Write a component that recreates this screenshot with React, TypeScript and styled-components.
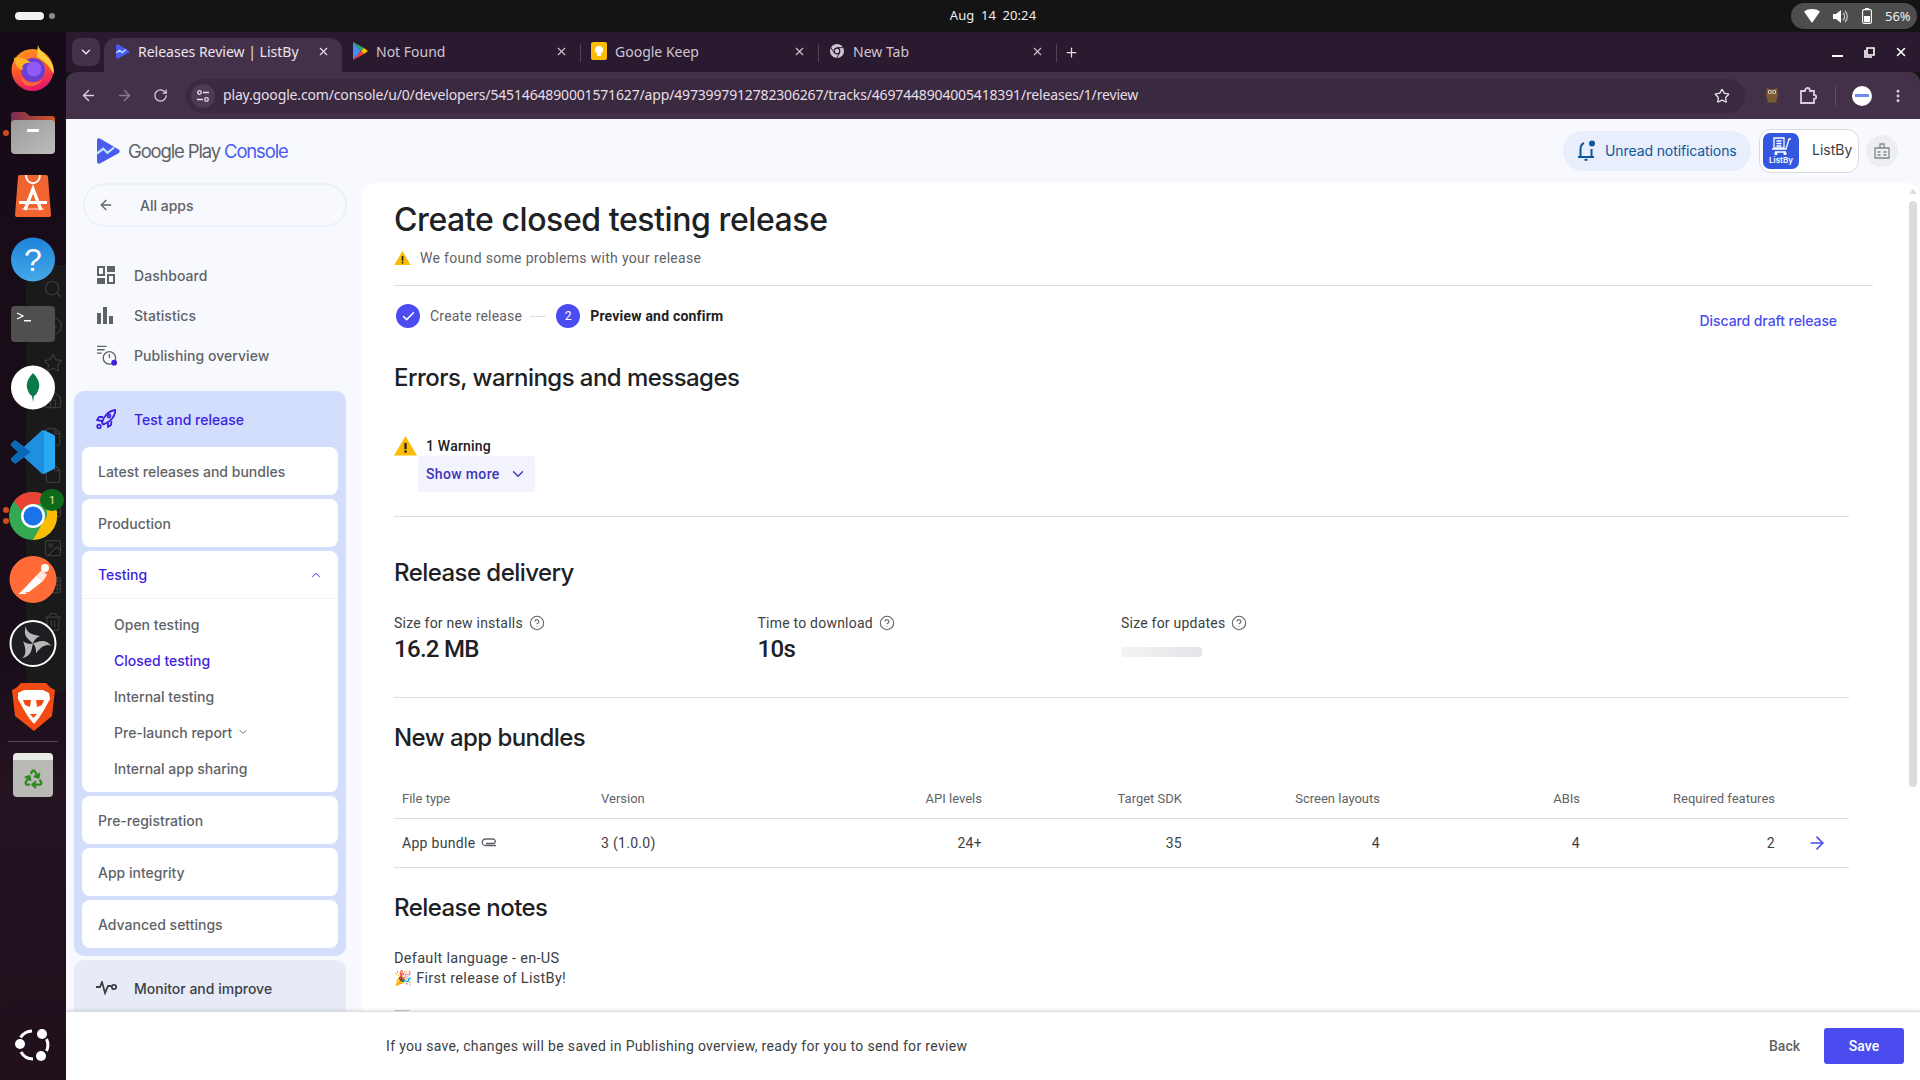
import React from "react";
import styled, { createGlobalStyle } from "styled-components";
import {
  ArrowLeft, ArrowRight, ChevronDown, ChevronUp, Clock, File, Film, Home, Image, Music,
  Recycle, RotateCw, Search, Star, Trash2, X, Plus, Check, EllipsisVertical, HelpCircle,
} from "lucide-react";

const SANS = `"Inter", "Liberation Sans", sans-serif`;
const BODY = `"Roboto", "Liberation Sans", sans-serif`;
const UI = `"Noto Sans", "Open Sans", sans-serif`;

const GlobalStyle = createGlobalStyle`
  html, body { margin: 0; padding: 0; height: 100%; overflow: hidden; background: #141414; }
  #root { height: 100%; }
  * { box-sizing: border-box; }
`;

const Screen = styled.div`
  width: 1920px;
  height: 1080px;
  display: flex;
  flex-direction: column;
  overflow: hidden;
`;

/* ---------- ubuntu top bar ---------- */
const TopBar = styled.div`
  height: 32px;
  flex: none;
  background: #141414;
  display: grid;
  grid-template-columns: 1fr auto 1fr;
  align-items: center;
  color: #eee;
  font: 13px ${UI};
`;
const Workspaces = styled.div`
  display: flex;
  align-items: center;
  gap: 5px;
  padding-left: 15px;
`;
const WorkspacePill = styled.span<{ $active?: boolean }>`
  display: block;
  width: ${(p) => (p.$active ? "29px" : "6px")};
  height: ${(p) => (p.$active ? "8px" : "6px")};
  border-radius: 4px;
  background: ${(p) => (p.$active ? "#f2f2f2" : "#8a8a8a")};
`;
const Clockface = styled.div`
  margin: 0 0 2px 66px;
  word-spacing: 3px;
  letter-spacing: 0.1px;
`;
const SystemPill = styled.div`
  justify-self: end;
  margin-right: 3px;
  width: 126px;
  height: 26px;
  border-radius: 13px;
  background: #4d4d4d;
  display: flex;
  align-items: center;
  gap: 13px;
  padding-left: 13px;
  font-size: 13px;
`;

const Desktop = styled.div`
  flex: 1;
  display: flex;
  min-height: 0;
`;

/* ---------- dock ---------- */
const Dock = styled.div`
  width: 66px;
  flex: none;
  position: relative;
  background: linear-gradient(176deg, #150b16 0%, #1a0d1a 60%, #241320 72%, #1f101c 100%);
  display: flex;
  flex-direction: column;
  align-items: center;
  padding-top: 13px;
`;
const GhostPanel = styled.div`
  position: absolute;
  left: 26px;
  top: 233px;
  width: 40px;
  height: 427px;
  background: #1a1a1a;
  display: flex;
  flex-direction: column;
  align-items: flex-end;
  gap: 17px;
  padding: 14px 3px 0 0;
  color: #3a3a3a;
`;
const DockSlot = styled.div<{ $h: number }>`
  position: relative;
  z-index: 1;
  width: 66px;
  height: ${(p) => p.$h}px;
  flex: none;
  display: flex;
  align-items: center;
  justify-content: center;
`;
const RunDot = styled.span<{ $top: number }>`
  position: absolute;
  left: 3px;
  top: ${(p) => p.$top}px;
  width: 6px;
  height: 6px;
  border-radius: 50%;
  background: #d2491c;
`;
const DockBadge = styled.span`
  position: absolute;
  left: 40px;
  top: -3px;
  width: 24px;
  height: 22px;
  border-radius: 50%;
  background: #0f6b1c;
  color: #e8e0a0;
  font: 11px ${BODY};
  display: flex;
  align-items: center;
  justify-content: center;
`;
const DockRule = styled.div`
  width: 50px;
  height: 1px;
  background: #55484f;
  margin: 10px 0 11px;
  position: relative;
  z-index: 1;
`;
const DockBottom = styled.div`
  margin-top: auto;
  margin-bottom: 19px;
  position: relative;
  z-index: 1;
  display: flex;
`;
const TrashTile = styled.div`
  width: 40px;
  height: 44px;
  border-radius: 4px;
  background: #b9b9b5;
  border-top: 7px solid #e9e9e6;
  display: flex;
  align-items: center;
  justify-content: center;
  color: #2d8a1f;
`;

/* ---------- browser chrome ---------- */
const Browser = styled.div`
  flex: 1;
  min-width: 0;
  display: flex;
  flex-direction: column;
`;
const TabStrip = styled.div`
  height: 40px;
  flex: none;
  background: #2a1a30;
  display: flex;
  padding: 6px 0 0 6px;
  color: #ddd3df;
  font: 14px ${UI};
`;
const TabSearch = styled.div`
  width: 28px;
  height: 28px;
  border-radius: 8px;
  background: #433149;
  display: flex;
  align-items: center;
  justify-content: center;
  color: #e8e0ea;
  margin-right: 4px;
`;
const Tab = styled.div<{ $active?: boolean }>`
  width: 238px;
  height: 34px;
  flex: none;
  display: flex;
  align-items: center;
  gap: 8px;
  padding: 0 12px 8px 11px;
  position: relative;
  border-radius: 12px 12px 0 0;
  background: ${(p) => (p.$active ? "#433149" : "transparent")};
  color: ${(p) => (p.$active ? "#ece4ee" : "#cfc5d2")};
`;
const TabTitle = styled.span`
  flex: 1;
  white-space: nowrap;
  overflow: hidden;
`;
const TabEdge = styled.span`
  position: absolute;
  right: -1px;
  top: 6px;
  width: 1px;
  height: 18px;
  background: #514357;
`;
const NewTab = styled.div`
  width: 28px;
  height: 28px;
  display: flex;
  align-items: center;
  justify-content: center;
  margin-left: 1px;
  color: #e4dce6;
`;
const WindowControls = styled.div`
  margin-left: auto;
  display: flex;
  align-items: center;
  height: 28px;
  padding-right: 3px;
  color: #fff;
`;
const ControlSlot = styled.div`
  width: 32px;
  display: flex;
  align-items: center;
  justify-content: center;
`;
const MinimizeBar = styled.span`
  width: 11px;
  height: 2px;
  background: #fff;
  margin-top: 8px;
`;
const Toolbar = styled.div`
  height: 47px;
  flex: none;
  background: #433149;
  border-radius: 10px 10px 0 0;
  display: flex;
  align-items: center;
  padding: 0 4px;
  color: #d9cfdc;
`;
const NavIcon = styled.div<{ $dim?: boolean }>`
  width: 36px;
  display: flex;
  justify-content: center;
  color: ${(p) => (p.$dim ? "#8a7a8f" : "#d9cfdc")};
`;
const Omnibox = styled.div`
  width: 1559px;
  height: 34px;
  margin-left: 8px;
  border-radius: 17px;
  background: #3a2a3f;
  display: flex;
  align-items: center;
  padding: 0 15px 0 5px;
  color: #e6dee8;
  font: 14px ${UI};
`;
const SiteChip = styled.div`
  width: 24px;
  height: 24px;
  border-radius: 50%;
  background: #4c3b52;
  display: flex;
  align-items: center;
  justify-content: center;
  margin-right: 8px;
`;
const Url = styled.span`
  flex: 1;
  white-space: nowrap;
  letter-spacing: -0.16px;
  padding-bottom: 3px;
`;
const ToolGroup = styled.div`
  flex: 1;
  display: flex;
  align-items: center;
  justify-content: flex-end;
`;
const ToolSlot = styled.div<{ $w: number }>`
  width: ${(p) => p.$w}px;
  display: flex;
  justify-content: center;
  align-items: center;
`;
const ToolRule = styled.span`
  width: 1px;
  height: 20px;
  background: #5e4e64;
`;
const Avatar = styled.span`
  width: 20px;
  height: 20px;
  border-radius: 50%;
  background: #fff;
  display: flex;
  align-items: center;
  justify-content: center;
`;

/* ---------- play console page ---------- */
const Page = styled.div`
  flex: 1;
  min-height: 0;
  display: flex;
  flex-direction: column;
  background: #f8f9fe;
  position: relative;
`;
const ConsoleHeader = styled.header`
  height: 64px;
  flex: none;
  display: flex;
  align-items: center;
  padding: 0 22px 0 29px;
`;
const Logo = styled.div`
  display: flex;
  align-items: center;
  gap: 7px;
  font: 400 18.5px ${SANS};
  letter-spacing: -1.15px;
  color: #5f6368;
`;
const LogoAccent = styled.span`
  color: #4a5cf0;
`;
const HeaderRight = styled.div`
  margin-left: auto;
  display: flex;
  align-items: center;
`;
const UnreadPill = styled.div`
  width: 188px;
  height: 40px;
  border-radius: 20px;
  background: #e8eefc;
  color: #0b57a0;
  display: flex;
  align-items: center;
  gap: 8px;
  padding: 0 0 1px 14px;
  font: 14px ${SANS};
  letter-spacing: -0.1px;
  margin-right: 8px;
`;
const AppChip = styled.div`
  width: 100px;
  height: 44px;
  border: 1px solid #dadce0;
  border-radius: 12px;
  background: #fff;
  display: flex;
  align-items: center;
  padding-left: 3px;
  gap: 13px;
  color: #3c4043;
  font: 14px ${SANS};
  margin-right: 7px;
`;
const ChipName = styled.span`
  padding-bottom: 3px;
`;
const AppTile = styled.div`
  width: 36px;
  height: 36px;
  border-radius: 7px;
  background: #3457e0;
  display: flex;
  flex-direction: column;
  align-items: center;
  justify-content: center;
  color: #fff;
  font: 600 8px ${SANS};
`;
const RoundButton = styled.div`
  width: 32px;
  height: 32px;
  border-radius: 50%;
  background: #eceef1;
  display: flex;
  align-items: center;
  justify-content: center;
`;
const Workspace = styled.div`
  flex: 1;
  min-height: 0;
  display: flex;
  overflow: hidden;
`;

/* ---------- sidebar ---------- */
const Sidebar = styled.aside`
  width: 296px;
  flex: none;
  padding: 0 16px 0 8px;
`;
const AllApps = styled.div`
  height: 44px;
  margin-left: 9px;
  width: 264px;
  border: 2px solid #edf0f8;
  border-radius: 22px;
  display: flex;
  align-items: center;
  padding-left: 13px;
  gap: 26px;
  color: #5f6368;
  font: 500 14px ${SANS};
`;
const TopNav = styled.nav`
  margin-top: 28px;
  display: flex;
  flex-direction: column;
`;
const NavRow = styled.div`
  height: 40px;
  display: flex;
  align-items: center;
  gap: 17px;
  padding-left: 23px;
  color: #5f6368;
  font: 500 14px ${SANS};
  letter-spacing: 0.05px;
`;
const NavGlyph = styled.span`
  width: 20px;
  flex: none;
  display: flex;
`;
const Section = styled.div`
  margin-top: 16px;
  background: #d3defc;
  border-radius: 10px;
  padding: 0 8px 8px;
`;
const SectionHead = styled.div`
  height: 56px;
  display: flex;
  align-items: center;
  gap: 18px;
  padding-left: 14px;
  color: #3d1fe0;
  font: 500 14px ${SANS};
`;
const SubCards = styled.div`
  display: flex;
  flex-direction: column;
  gap: 4px;
`;
const SubCard = styled.div`
  background: #fff;
  border-radius: 8px;
`;
const SubTitle = styled.div<{ $active?: boolean; $ruled?: boolean }>`
  height: 48px;
  display: flex;
  align-items: center;
  justify-content: space-between;
  padding: 0 15px 0 16px;
  color: ${(p) => (p.$active ? "#3d1fe0" : "#5f6368")};
  font: 500 14px ${SANS};
  border-bottom: ${(p) => (p.$ruled ? "1px solid #f1f3f4" : "none")};
`;
const SubList = styled.div`
  padding: 7px 0 6px;
`;
const SubItem = styled.div<{ $active?: boolean }>`
  height: 36px;
  display: flex;
  align-items: center;
  gap: 5px;
  padding-left: 32px;
  color: ${(p) => (p.$active ? "#3d1fe0" : "#5f6368")};
  font: 500 14px ${SANS};
`;
const MonitorHead = styled.div`
  margin-top: 4px;
  height: 56px;
  background: #e7ebf8;
  border-radius: 10px 10px 0 0;
  display: flex;
  align-items: center;
  gap: 17px;
  padding-left: 22px;
  color: #3c4043;
  font: 500 14px ${SANS};
`;

/* ---------- main card ---------- */
const Main = styled.main`
  flex: 1;
  min-width: 0;
  background: #fff;
  border-radius: 12px 12px 0 0;
  padding: 0 71px 0 32px;
  position: relative;
  overflow: hidden;
`;
const Title = styled.h1`
  margin: 0;
  padding-top: 17px;
  height: 59px;
  font: 500 32px/40px ${SANS};
  letter-spacing: -0.42px;
  color: #202124;
`;
const WarnLine = styled.div`
  height: 44px;
  margin-right: -24px;
  padding-top: 5px;
  display: flex;
  gap: 9px;
  color: #5f6368;
  font: 14px/22px ${BODY};
  letter-spacing: 0.32px;
  border-bottom: 1px solid #dadce0;
  align-items: flex-start;
`;
const WarnGlyph = styled.span`
  display: flex;
  padding-top: 4px;
`;
const Stepper = styled.div`
  margin-top: 18px;
  height: 24px;
  display: flex;
  align-items: center;
  font: 14px ${BODY};
  letter-spacing: 0.2px;
  color: #5f6368;
`;
const StepDot = styled.span`
  width: 24px;
  height: 24px;
  border-radius: 50%;
  background: #4a4cf0;
  color: #fff;
  display: flex;
  align-items: center;
  justify-content: center;
  font: 12px ${BODY};
  margin: 0 10px 0 2px;
`;
const StepLine = styled.span`
  width: 16px;
  height: 1px;
  background: #dadce0;
  margin: 0 8px;
`;
const StepStrong = styled.span`
  color: #202124;
  font-weight: 700;
`;
const Discard = styled.a`
  margin-left: auto;
  margin-right: 12px;
  margin-top: 8px;
  color: #4a4cf0;
  font: 500 14px ${SANS};
  letter-spacing: -0.08px;
`;
const SectionTitle = styled.h2<{ $top: number }>`
  margin: ${(p) => p.$top}px 0 0;
  font: 500 24px/32px ${SANS};
  letter-spacing: -0.55px;
  color: #202124;
`;
const WarnBlock = styled.div`
  margin-top: 42px;
  display: flex;
  gap: 9px;
`;
const WarnCount = styled.div`
  color: #202124;
  font: 500 14px/20px ${BODY};
  letter-spacing: 0.2px;
`;
const WarnBody = styled.div`
  padding-top: 0;
`;
const ShowMore = styled.div`
  width: 117px;
  height: 36px;
  margin-left: -8px;
  background: #f3f3fd;
  border-radius: 3px;
  display: flex;
  align-items: center;
  gap: 9px;
  padding-left: 8px;
  color: #3d35b8;
  font: 500 14px ${BODY};
  letter-spacing: 0.35px;
`;
const Rule = styled.hr<{ $top: number }>`
  margin: ${(p) => p.$top}px 0 0;
  border: 0;
  height: 1px;
  background: #dadce0;
`;
const Stats = styled.div`
  margin-top: 24px;
  display: grid;
  grid-template-columns: repeat(3, 363.5px);
`;
const StatLabel = styled.div`
  display: flex;
  align-items: center;
  gap: 6px;
  color: #3c4043;
  font: 14px/20px ${BODY};
  letter-spacing: 0.22px;
`;
const StatValue = styled.div`
  font: 500 24px/30px ${BODY};
  letter-spacing: -0.7px;
  color: #202124;
  padding-top: 1px;
  height: 30px;
`;
const Skeleton = styled.div`
  width: 81px;
  height: 10px;
  margin-top: 14px;
  border-radius: 3px;
  background: linear-gradient(90deg, #f1f3f4, #e3e5e8);
`;
const BundleTable = styled.div`
  margin-top: 21px;
`;
const TableRow = styled.div<{ $head?: boolean }>`
  display: grid;
  grid-template-columns: 199px 197px 200px 200px 198px 200px 195px 66px;
  align-items: center;
  height: ${(p) => (p.$head ? "44px" : "49px")};
  padding-top: ${(p) => (p.$head ? "4px" : "0")};
  border-bottom: 1px solid #dadce0;
  color: ${(p) => (p.$head ? "#5f6368" : "#3c4043")};
  font: ${(p) => (p.$head ? "13px" : "14px")} ${BODY};
  letter-spacing: ${(p) => (p.$head ? "0" : "0.3px")};
`;
const Cell = styled.div<{ $right?: boolean }>`
  padding: 0 8px;
  white-space: nowrap;
  display: flex;
  align-items: center;
  justify-content: ${(p) => (p.$right ? "flex-end" : "flex-start")};
  gap: 6px;
`;
const ArrowCell = styled.div`
  padding-left: 24px;
  display: flex;
  color: #4a4cf0;
`;
const Notes = styled.div`
  margin-top: 25px;
  color: #3c4043;
  font: 14.5px/20px ${BODY};
  letter-spacing: 0.3px;
`;
const NoteGlyph = styled.div`
  margin-top: 21px;
  width: 16px;
  height: 16px;
  background: #b9c6cc;
  border-radius: 2px;
`;
const ScrollUp = styled.span`
  position: absolute;
  right: 3px;
  top: 6px;
  width: 0;
  height: 0;
  border-left: 4px solid transparent;
  border-right: 4px solid transparent;
  border-bottom: 5px solid #dadce0;
`;
const ScrollThumb = styled.span`
  position: absolute;
  right: 3px;
  top: 18px;
  width: 8px;
  height: 586px;
  border-radius: 4px;
  background: #dadce0;
`;

/* ---------- footer ---------- */
const Footer = styled.footer`
  height: 69px;
  flex: none;
  background: #fff;
  border-top: 1px solid #dadce0;
  box-shadow: 0 -1px 3px rgba(60, 64, 67, 0.15);
  display: flex;
  align-items: center;
  padding: 0 16px 0 320px;
  position: relative;
  z-index: 2;
  color: #3c4043;
  font: 14px ${BODY};
`;
const FooterNote = styled.span`
  flex: 1;
  letter-spacing: 0.33px;
`;
const BackLink = styled.span`
  color: #5f6368;
  font-weight: 500;
  margin-right: 24px;
`;
const SaveButton = styled.button`
  width: 80px;
  height: 36px;
  border: 0;
  border-radius: 3px;
  background: #4a4cf0;
  color: #fff;
  font: 500 14px ${BODY};
`;

/* ---------- drawings ---------- */
const WarnIcon = ({ size }: { size: number }) => (
  <svg width={size} height={size * 0.85} viewBox="0 0 20 17">
    <path d="M10 0 20 17H0Z" fill="#fbbc04" />
    <rect x="9" y="6" width="2" height="5.5" fill="#202124" />
    <rect x="9" y="12.6" width="2" height="2" fill="#202124" />
  </svg>
);

const ConsoleMark = ({ size }: { size: number }) => (
  <svg width={size} height={size} viewBox="0 0 24 26">
    <path d="M1 2.2C1 .6 2.6-.2 3.9.6L22.6 11.4c1.5.9 1.5 2.9 0 3.8L3.9 25.4C2.6 26.2 1 25.3 1 23.8Z" fill="#4a5cf0" />
    <path d="M1 15.5 7.2 10.8 11.5 14.8 18 9.5" fill="none" stroke="#b9e6fb" strokeWidth="2.2" />
  </svg>
);

const PlayFavicon = () => (
  <svg width="15" height="18" viewBox="0 0 15 18">
    <path d="M0 0 8 9 0 18Z" fill="#4a8af4" />
    <path d="M0 0 11 6 8 9Z" fill="#34a853" />
    <path d="M0 18 11 12 8 9Z" fill="#ea4335" />
    <path d="M11 6 15 9 11 12 8 9Z" fill="#fbbc04" />
  </svg>
);

const KeepFavicon = () => (
  <svg width="16" height="18" viewBox="0 0 16 18">
    <rect width="16" height="18" rx="2" fill="#fbbc04" />
    <circle cx="8" cy="8" r="4" fill="#fff" />
    <rect x="6" y="12" width="4" height="2" fill="#fff" />
  </svg>
);

const ChromeOutline = () => (
  <svg width="16" height="16" viewBox="0 0 16 16">
    <circle cx="8" cy="8" r="7" fill="#cfc5d2" />
    <circle cx="8" cy="8" r="3.4" fill="#2a1a30" />
    <circle cx="8" cy="8" r="2.2" fill="#cfc5d2" />
    <path d="M8 4.6H14.5M5 9.7 1.8 4.3M10.9 9.7 7.6 15" stroke="#2a1a30" strokeWidth="0.9" />
  </svg>
);

const Firefox = () => (
  <svg width="44" height="46" viewBox="0 0 44 46">
    <defs>
      <linearGradient id="ffa" x1="0.2" y1="0" x2="0.5" y2="1">
        <stop offset="0" stopColor="#ff9a1f" />
        <stop offset="0.55" stopColor="#ff4f2e" />
        <stop offset="1" stopColor="#e3186d" />
      </linearGradient>
    </defs>
    <circle cx="21.5" cy="25" r="21" fill="url(#ffa)" />
    <path d="M27 0C28 6 35 9 39 15 42 20 43.5 24 42.5 29 38 20 32 15 26 12 27 8 26 4 27 0Z" fill="#ffd23b" />
    <circle cx="22" cy="25" r="12" fill="#6a3fd0" />
    <circle cx="23" cy="24" r="7.5" fill="#8f5af5" />
    <path d="M3 13C8 11 15 13 20 18 14 17 10 20 12 25 8 25 4 20 3 13Z" fill="#ffb21f" />
    <path d="M10 31C14 38 24 40 32 34 27 41 19 43 13 39 11 37 10 34 10 31Z" fill="#ff6a3a" />
  </svg>
);

const Folder = () => (
  <svg width="44" height="42" viewBox="0 0 44 42">
    <defs>
      <linearGradient id="flb" x1="0" y1="0" x2="1" y2="0">
        <stop offset="0" stopColor="#7a2c52" />
        <stop offset="1" stopColor="#d2562a" />
      </linearGradient>
      <linearGradient id="flf" x1="0" y1="0" x2="1" y2="1">
        <stop offset="0" stopColor="#9a9a9a" />
        <stop offset="1" stopColor="#bdbdbd" />
      </linearGradient>
    </defs>
    <path d="M0 3a3 3 0 0 1 3-3h11l5 4h22a3 3 0 0 1 3 3v12H0Z" fill="url(#flb)" />
    <rect y="8" width="44" height="34" rx="4" fill="url(#flf)" />
    <rect x="16" y="17" width="12" height="3" rx="1" fill="#fff" />
  </svg>
);

const AppCenter = () => (
  <svg width="36" height="42" viewBox="0 0 36 42">
    <path d="M3 2a2 2 0 0 1 2-2h26a2 2 0 0 1 2 2l3 38a2 2 0 0 1-2 2H2a2 2 0 0 1-2-2Z" fill="#f0652f" />
    <path d="M11 0c0 11 14 11 14 0" fill="none" stroke="#fff" strokeWidth="1.8" />
    <path d="M10 35 18 14 26 35" fill="none" stroke="#fff" strokeWidth="3.4" />
    <rect x="4" y="26" width="28" height="3" fill="#fff" />
    <rect x="7" y="33" width="22" height="2" fill="#fff" opacity="0.4" />
  </svg>
);

const HelpBadge = () => (
  <svg width="44" height="45" viewBox="0 0 44 45">
    <defs>
      <linearGradient id="hlp" x1="0" y1="0" x2="0" y2="1">
        <stop offset="0" stopColor="#1d83d8" />
        <stop offset="1" stopColor="#46a9e9" />
      </linearGradient>
    </defs>
    <circle cx="22" cy="22.5" r="22" fill="url(#hlp)" />
    <text x="22" y="34" textAnchor="middle" fontFamily="Liberation Sans" fontSize="32" fill="#fff">?</text>
  </svg>
);

const Terminal = () => (
  <svg width="44" height="36" viewBox="0 0 44 36">
    <rect width="44" height="36" rx="4" fill="#4f4f4f" />
    <path d="M6 7 12 10 6 13" fill="none" stroke="#fff" strokeWidth="1.3" />
    <rect x="13" y="14" width="7" height="1.5" fill="#fff" />
  </svg>
);

const Mongo = () => (
  <svg width="44" height="45" viewBox="0 0 44 45">
    <circle cx="22" cy="22.5" r="22" fill="#fff" />
    <path d="M22 8c5 5 7 10 6 15-1 4-3 7-5 8l-1 6-1-6c-2-1-4-4-5-8-1-5 1-10 6-15Z" fill="#0b7a4b" />
  </svg>
);

const VSCode = () => (
  <svg width="44" height="44" viewBox="0 0 100 100">
    <path d="M70.9 99.3a6.2 6.2 0 0 0 4.9-.2L96.4 89.2A6.2 6.2 0 0 0 100 83.6V16.4a6.2 6.2 0 0 0-3.5-5.6L75.8.9a6.2 6.2 0 0 0-7.1 1.2L29.3 38.1 12 25a4.2 4.2 0 0 0-5.3.2L1.3 30.2a4.2 4.2 0 0 0 0 6.2L16.3 50 1.3 63.6a4.2 4.2 0 0 0 0 6.2l5.4 4.9a4.2 4.2 0 0 0 5.3.2l17.3-13.1 39.4 36a6.2 6.2 0 0 0 2.2 1.5ZM75 27.3 45.1 50 75 72.7Z" fill="#1f8fe0" />
    <path d="M29.3 38.1 12 25a4.2 4.2 0 0 0-5.3.2L1.3 30.2a4.2 4.2 0 0 0 0 6.2L16.3 50 1.3 63.6a4.2 4.2 0 0 0 0 6.2l5.4 4.9a4.2 4.2 0 0 0 5.3.2l17.3-13.1L45.1 50Z" fill="#0a69b4" />
    <path d="M75 .6 96.5 10.8A6.2 6.2 0 0 1 100 16.4V83.6a6.2 6.2 0 0 1-3.6 5.6L75 99.4Z" fill="#28a8f5" />
  </svg>
);

const ChromeLogo = () => (
  <svg width="50" height="48" viewBox="0 0 50 48">
    <circle cx="25" cy="24" r="24" fill="#34a853" />
    <path d="M25 0a24 24 0 0 1 21 12H25a12 12 0 0 0-11 7L6 9A24 24 0 0 1 25 0Z" fill="#ea4335" />
    <path d="M46 12a24 24 0 0 1-21 36l10-18a12 12 0 0 0 0-18Z" fill="#fbbc04" />
    <circle cx="25" cy="24" r="12" fill="#fff" />
    <circle cx="25" cy="24" r="9.5" fill="#1a73e8" />
  </svg>
);

const Postman = () => (
  <svg width="48" height="47" viewBox="0 0 48 47">
    <circle cx="24" cy="23.5" r="23.5" fill="#ff6c37" />
    <path d="M11 37 27 20l7 5-14 11Z" fill="#fff" />
    <path d="M27 20 33 14l5 5-4 6Z" fill="#fff" opacity="0.85" />
    <circle cx="36" cy="12" r="4" fill="#fff" />
    <path d="M9 38h9l-4-3Z" fill="#fff" />
  </svg>
);

const Obs = () => (
  <svg width="48" height="47" viewBox="0 0 48 47">
    <circle cx="24" cy="23.5" r="22.5" fill="#1e1e22" stroke="#fff" strokeWidth="2" />
    {[0, 120, 240].map((deg) => (
      <path
        key={deg}
        d="M24 23.5C21 20 13 17 17 6 16.5 12 23 15 31 16 27 18 25 20 24 23.5Z"
        fill="#b8b8b8"
        transform={`rotate(${deg} 24 23.5)`}
      />
    ))}
  </svg>
);

const Brave = () => (
  <svg width="43" height="48" viewBox="0 0 43 48">
    <path d="M9 0h25l5 5 4 2-3 26-18 15L3 33 0 7l4-2Z" fill="#f14a12" />
    <path d="M6 10l6-3h19l6 3 1 6-6 11-5 8-5 6-5-6-5-8-6-11Z" fill="#fff" />
    <path d="M11 17h8l-1 7-5-2ZM32 17h-8l1 7 5-2ZM18 31h7l-3.5 4Z" fill="#f14a12" />
  </svg>
);

const UbuntuMark = () => (
  <svg width="37" height="32" viewBox="0 0 37 32" fill="none" stroke="#fff" strokeWidth="3">
    <path d="M5.6 8.5A14 14 0 0 1 17 2" />
    <path d="M31.5 10A14 14 0 0 1 31.5 22" />
    <path d="M18 30A14 14 0 0 1 6 23" />
    <circle cx="5" cy="15" r="5" fill="#fff" stroke="none" />
    <circle cx="27" cy="5" r="5" fill="#fff" stroke="none" />
    <circle cx="26" cy="27" r="5" fill="#fff" stroke="none" />
  </svg>
);

const Owl = () => (
  <svg width="14" height="18" viewBox="0 0 14 18">
    <path d="M2 0 4 2h6l2-2 1 8-2 7H3L1 8Z" fill="#7a5a32" />
    <circle cx="4.8" cy="5" r="2" fill="#e8dcc0" />
    <circle cx="9.2" cy="5" r="2" fill="#e8dcc0" />
    <circle cx="4.8" cy="5" r="0.9" fill="#222" />
    <circle cx="9.2" cy="5" r="0.9" fill="#222" />
    <rect x="0" y="15" width="14" height="1" fill="#5e4a30" />
  </svg>
);

const Puzzle = () => (
  <svg width="18" height="18" viewBox="0 0 18 18" fill="none" stroke="#e0c8e6" strokeWidth="1.8">
    <path d="M2 4h4c0-4 5-4 5 0h4v4c3 0 3 4 0 4v4H2Z" />
  </svg>
);

const SiteTune = () => (
  <svg width="14" height="14" viewBox="0 0 14 14" fill="none" stroke="#e6dee8" strokeWidth="1.3">
    <circle cx="3.5" cy="3.5" r="1.8" />
    <circle cx="10.5" cy="10.5" r="1.8" />
    <path d="M7 3.5h6M1 10.5h6" />
  </svg>
);

const WifiGlyph = () => (
  <svg width="16" height="14" viewBox="0 0 16 14"><path d="M0 2.5C4.5-.8 11.5-.8 16 2.5L8 14Z" fill="#fff" /></svg>
);
const VolumeGlyph = () => (
  <svg width="16" height="15" viewBox="0 0 16 15" fill="none">
    <path d="M0 5h3l5-4v13l-5-4H0Z" fill="#fff" />
    <path d="M10 4c2 2 2 5 0 7M12 2c3 3 3 8 0 11" stroke="#ccc" strokeWidth="1.2" />
  </svg>
);
const BatteryGlyph = () => (
  <svg width="10" height="16" viewBox="0 0 10 16">
    <rect x="3" y="0" width="4" height="2" fill="#fff" />
    <rect x="0.6" y="1.6" width="8.8" height="13.8" rx="1.5" fill="none" stroke="#fff" strokeWidth="1.1" />
    <rect x="2" y="8" width="6" height="6" fill="#fff" />
  </svg>
);

const RestoreGlyph = () => (
  <svg width="11" height="11" viewBox="0 0 11 11" fill="none" stroke="#fff" strokeWidth="1.6">
    <path d="M3 1h7v7H3ZM1 3v7h7" />
  </svg>
);

const DashIcon = () => (
  <svg width="18" height="18" viewBox="0 0 18 18" fill="#5f6368">
    <path d="M0 0h8v10H0Zm2 2v6h4V2ZM10 0h8v6h-8ZM0 12h8v6H0ZM10 8h8v10h-8Zm2 2v6h4v-6Z" fillRule="evenodd" />
  </svg>
);
const StatsIcon = () => (
  <svg width="16" height="17" viewBox="0 0 16 17" fill="#5f6368">
    <rect x="0" y="6" width="4" height="11" />
    <rect x="6" y="0" width="4" height="17" />
    <rect x="12" y="9" width="4" height="8" />
  </svg>
);
const PublishIcon = () => (
  <svg width="21" height="21" viewBox="0 0 21 21" fill="none" stroke="#5f6368" strokeWidth="1.4">
    <path d="M0 1h10M0 4.5h8M0 8h5" />
    <path d="M6.5 13a6.5 6.5 0 0 1 13 0 6.5 6.5 0 0 1-6 6.5 6.5 6.5 0 0 1-7-6.5Z" />
    <path d="M13 9v4" />
    <circle cx="18" cy="18" r="3" fill="#3d1fe0" stroke="none" />
  </svg>
);
const RocketIcon = () => (
  <svg width="20" height="20" viewBox="0 0 20 20" fill="none" stroke="#3d1fe0" strokeWidth="1.8" strokeLinejoin="round">
    <path d="M6 14C7 8 12 2 19.5 1c-.5 7-6 12-12 14.5Z" />
    <circle cx="13" cy="7" r="1.5" />
    <path d="M7 8H3L1 11l5 1M12 14v4l3-2 .5-4" />
    <circle cx="3" cy="17.5" r="1.8" />
  </svg>
);
const MonitorIcon = () => (
  <svg width="21" height="14" viewBox="0 0 21 14" fill="none" stroke="#3c4043" strokeWidth="1.8">
    <path d="M0 6h4l2-5 3 11 3-7h3" />
    <circle cx="18" cy="6" r="2.2" />
  </svg>
);
const CartTile = () => (
  <svg width="22" height="18" viewBox="0 0 22 18" fill="none" stroke="#fff" strokeWidth="1.3">
    <path d="M4 1h10v10H4ZM6.5 4h5M6.5 6.5h5M6.5 9h5" />
    <path d="M2 12h14l3-10h2M5 15h11" />
    <circle cx="6" cy="16.5" r="1" fill="#fff" />
    <circle cx="15" cy="16.5" r="1" fill="#fff" />
  </svg>
);
const UnreadBell = () => (
  <svg width="20" height="22" viewBox="0 0 20 22" fill="none" stroke="#0b57a0" strokeWidth="2">
    <path d="M1 17h16M3.5 17V9c0-3 1.5-5 3.5-6M14.5 17V9" />
    <circle cx="15" cy="3.5" r="3" fill="#0b57a0" stroke="none" />
    <path d="M7.5 19.8h3" />
  </svg>
);
const BadgeIcon = () => (
  <svg width="16" height="16" viewBox="0 0 16 16" fill="none" stroke="#80868b" strokeWidth="1.3">
    <path d="M1 5h14v10H1ZM6 5V1h4v4M3.5 9h3M3.5 12h3M9.5 9h3M9.5 12h3" />
  </svg>
);
const ClipIcon = () => (
  <svg width="16" height="10" viewBox="0 0 16 10" fill="none" stroke="#5f6368" strokeWidth="1.3">
    <path d="M15 7.5H4.5a3.2 3.2 0 0 1 0-6.5H12a2.2 2.2 0 0 1 0 4.5H5" />
  </svg>
);

const testingItems = ["Open testing", "Closed testing", "Internal testing"];
const ghostIcons = [Search, Clock, Star, Home, File, File, Music, Image, Film, Trash2];

export default function App() {
  return (
    <>
      <GlobalStyle />
      <Screen>
        <TopBar>
          <Workspaces>
            <WorkspacePill $active />
            <WorkspacePill />
          </Workspaces>
          <Clockface>Aug 14  20:24</Clockface>
          <SystemPill>
            <WifiGlyph />
            <VolumeGlyph />
            <BatteryGlyph />
            <span>56%</span>
          </SystemPill>
        </TopBar>
        <Desktop>
          <Dock>
            <GhostPanel>
              {ghostIcons.map((Icon, i) => (
                <Icon key={i} size={20} strokeWidth={1.5} />
              ))}
            </GhostPanel>
            <DockSlot $h={46}><Firefox /></DockSlot>
            <DockSlot $h={21} />
            <DockSlot $h={42}><RunDot $top={18} /><Folder /></DockSlot>
            <DockSlot $h={21} />
            <DockSlot $h={42}><AppCenter /></DockSlot>
            <DockSlot $h={20} />
            <DockSlot $h={45}><HelpBadge /></DockSlot>
            <DockSlot $h={24} />
            <DockSlot $h={36}><Terminal /></DockSlot>
            <DockSlot $h={23} />
            <DockSlot $h={45}><Mongo /></DockSlot>
            <DockSlot $h={20} />
            <DockSlot $h={44}><VSCode /></DockSlot>
            <DockSlot $h={18} />
            <DockSlot $h={48}>
              <RunDot $top={15} />
              <RunDot $top={26} />
              <ChromeLogo />
              <DockBadge>1</DockBadge>
            </DockSlot>
            <DockSlot $h={16} />
            <DockSlot $h={47}><Postman /></DockSlot>
            <DockSlot $h={17} />
            <DockSlot $h={47}><Obs /></DockSlot>
            <DockSlot $h={16} />
            <DockSlot $h={48}><Brave /></DockSlot>
            <DockRule />
            <DockSlot $h={44}>
              <TrashTile><Recycle size={21} strokeWidth={2.6} /></TrashTile>
            </DockSlot>
            <DockBottom><UbuntuMark /></DockBottom>
          </Dock>

          <Browser>
            <TabStrip>
              <TabSearch><ChevronDown size={14} strokeWidth={2.5} /></TabSearch>
              <Tab $active>
                <ConsoleMark size={15} />
                <TabTitle>Releases Review | ListBy</TabTitle>
                <X size={13} strokeWidth={2} />
              </Tab>
              <Tab>
                <PlayFavicon />
                <TabTitle>Not Found</TabTitle>
                <X size={13} strokeWidth={2} />
                <TabEdge />
              </Tab>
              <Tab>
                <KeepFavicon />
                <TabTitle>Google Keep</TabTitle>
                <X size={13} strokeWidth={2} />
                <TabEdge />
              </Tab>
              <Tab>
                <ChromeOutline />
                <TabTitle>New Tab</TabTitle>
                <X size={13} strokeWidth={2} />
                <TabEdge />
              </Tab>
              <NewTab><Plus size={15} strokeWidth={2} /></NewTab>
              <WindowControls>
                <ControlSlot><MinimizeBar /></ControlSlot>
                <ControlSlot><RestoreGlyph /></ControlSlot>
                <ControlSlot><X size={14} strokeWidth={2.6} /></ControlSlot>
              </WindowControls>
            </TabStrip>
            <Toolbar>
              <NavIcon><ArrowLeft size={17} strokeWidth={2} /></NavIcon>
              <NavIcon $dim><ArrowRight size={17} strokeWidth={2} /></NavIcon>
              <NavIcon><RotateCw size={15} strokeWidth={2} /></NavIcon>
              <Omnibox>
                <SiteChip><SiteTune /></SiteChip>
                <Url>play.google.com/console/u/0/developers/5451464890001571627/app/4973997912782306267/tracks/4697448904005418391/releases/1/review</Url>
                <Star size={16} strokeWidth={2} />
              </Omnibox>
              <ToolGroup>
                <ToolSlot $w={36}><Owl /></ToolSlot>
                <ToolSlot $w={36}><Puzzle /></ToolSlot>
                <ToolSlot $w={18}><ToolRule /></ToolSlot>
                <ToolSlot $w={36}>
                  <Avatar><svg width="14" height="3" viewBox="0 0 14 3"><rect width="14" height="3" fill="#6f8cf0" /></svg></Avatar>
                </ToolSlot>
                <ToolSlot $w={36}><EllipsisVertical size={16} strokeWidth={2.4} /></ToolSlot>
              </ToolGroup>
            </Toolbar>

            <Page>
              <ConsoleHeader>
                <Logo>
                  <ConsoleMark size={26} />
                  <span>Google Play <LogoAccent>Console</LogoAccent></span>
                </Logo>
                <HeaderRight>
                  <UnreadPill><UnreadBell />Unread notifications</UnreadPill>
                  <AppChip>
                    <AppTile><CartTile />ListBy</AppTile>
                    <ChipName>ListBy</ChipName>
                  </AppChip>
                  <RoundButton><BadgeIcon /></RoundButton>
                </HeaderRight>
              </ConsoleHeader>
              <Workspace>
                <Sidebar>
                  <AllApps><ArrowLeft size={16} strokeWidth={2} />All apps</AllApps>
                  <TopNav>
                    <NavRow><NavGlyph><DashIcon /></NavGlyph>Dashboard</NavRow>
                    <NavRow><NavGlyph><StatsIcon /></NavGlyph>Statistics</NavRow>
                    <NavRow><NavGlyph><PublishIcon /></NavGlyph>Publishing overview</NavRow>
                  </TopNav>
                  <Section>
                    <SectionHead><RocketIcon />Test and release</SectionHead>
                    <SubCards>
                      <SubCard><SubTitle>Latest releases and bundles</SubTitle></SubCard>
                      <SubCard><SubTitle>Production</SubTitle></SubCard>
                      <SubCard>
                        <SubTitle $active $ruled>Testing<ChevronUp size={14} strokeWidth={1.6} /></SubTitle>
                        <SubList>
                          {testingItems.map((s) => (
                            <SubItem key={s} $active={s === "Closed testing"}>{s}</SubItem>
                          ))}
                          <SubItem>Pre-launch report <ChevronDown size={12} strokeWidth={2} /></SubItem>
                          <SubItem>Internal app sharing</SubItem>
                        </SubList>
                      </SubCard>
                      <SubCard><SubTitle>Pre-registration</SubTitle></SubCard>
                      <SubCard><SubTitle>App integrity</SubTitle></SubCard>
                      <SubCard><SubTitle>Advanced settings</SubTitle></SubCard>
                    </SubCards>
                  </Section>
                  <MonitorHead><MonitorIcon />Monitor and improve</MonitorHead>
                </Sidebar>

                <Main>
                  <ScrollUp />
                  <ScrollThumb />
                  <Title>Create closed testing release</Title>
                  <WarnLine>
                    <WarnGlyph><WarnIcon size={17} /></WarnGlyph>
                    We found some problems with your release
                  </WarnLine>
                  <Stepper>
                    <StepDot><Check size={15} strokeWidth={2.4} /></StepDot>
                    Create release
                    <StepLine />
                    <StepDot>2</StepDot>
                    <StepStrong>Preview and confirm</StepStrong>
                    <Discard>Discard draft release</Discard>
                  </Stepper>
                  <SectionTitle $top={34}>Errors, warnings and messages</SectionTitle>
                  <WarnBlock>
                    <WarnIcon size={23} />
                    <WarnBody>
                      <WarnCount>1 Warning</WarnCount>
                      <ShowMore>Show more <ChevronDown size={18} strokeWidth={1.8} /></ShowMore>
                    </WarnBody>
                  </WarnBlock>
                  <Rule $top={24} />
                  <SectionTitle $top={40}>Release delivery</SectionTitle>
                  <Stats>
                    <div>
                      <StatLabel>Size for new installs <HelpCircle size={16} strokeWidth={1.6} color="#5f6368" /></StatLabel>
                      <StatValue>16.2 MB</StatValue>
                    </div>
                    <div>
                      <StatLabel>Time to download <HelpCircle size={16} strokeWidth={1.6} color="#5f6368" /></StatLabel>
                      <StatValue>10s</StatValue>
                    </div>
                    <div>
                      <StatLabel>Size for updates <HelpCircle size={16} strokeWidth={1.6} color="#5f6368" /></StatLabel>
                      <Skeleton />
                    </div>
                  </Stats>
                  <Rule $top={34} />
                  <SectionTitle $top={24}>New app bundles</SectionTitle>
                  <BundleTable>
                    <TableRow $head>
                      <Cell>File type</Cell>
                      <Cell>Version</Cell>
                      <Cell $right>API levels</Cell>
                      <Cell $right>Target SDK</Cell>
                      <Cell $right>Screen layouts</Cell>
                      <Cell $right>ABIs</Cell>
                      <Cell $right>Required features</Cell>
                    </TableRow>
                    <TableRow>
                      <Cell>App bundle <ClipIcon /></Cell>
                      <Cell>3 (1.0.0)</Cell>
                      <Cell $right>24+</Cell>
                      <Cell $right>35</Cell>
                      <Cell $right>4</Cell>
                      <Cell $right>4</Cell>
                      <Cell $right>2</Cell>
                      <ArrowCell><ArrowRight size={20} strokeWidth={2} /></ArrowCell>
                    </TableRow>
                  </BundleTable>
                  <SectionTitle $top={24}>Release notes</SectionTitle>
                  <Notes>
                    Default language - en-US
                    <br />
                    🎉 First release of ListBy!
                  </Notes>
                  <NoteGlyph />
                </Main>
              </Workspace>
              <Footer>
                <FooterNote>If you save, changes will be saved in Publishing overview, ready for you to send for review</FooterNote>
                <BackLink>Back</BackLink>
                <SaveButton>Save</SaveButton>
              </Footer>
            </Page>
          </Browser>
        </Desktop>
      </Screen>
    </>
  );
}
